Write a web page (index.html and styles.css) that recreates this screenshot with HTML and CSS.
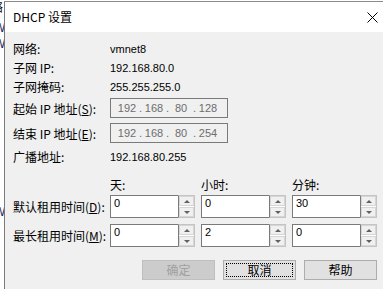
FILE: index.html
```html
<!DOCTYPE html>
<html lang="zh-CN">
<head>
    <meta charset="UTF-8">
    <title>DHCP 设置</title>
    <link rel="stylesheet" href="styles.css">
</head>
<body>
    <div class="screen">
        <div class="strip">
            <div class="strip-line cjk">络</div>
            <div class="strip-line w first-w">W</div>
            <div class="strip-line w">W</div>
            <div class="strip-gap"></div>
            <div class="strip-line w">W</div>
        </div>

        <div class="dialog">
            <div class="titlebar">
                <span class="title">DHCP 设置</span>
                <svg class="close" width="11" height="11" viewBox="0 0 11 11">
                    <path d="M0.5 0.5 L10.5 10.5 M10.5 0.5 L0.5 10.5" stroke="#000" stroke-width="1" fill="none"/>
                </svg>
            </div>

            <div class="content">
                <div class="row">
                    <span class="label">网络:</span>
                    <span class="value">vmnet8</span>
                </div>
                <div class="row">
                    <span class="label">子网 IP:</span>
                    <span class="value">192.168.80.0</span>
                </div>
                <div class="row">
                    <span class="label">子网掩码:</span>
                    <span class="value">255.255.255.0</span>
                </div>

                <div class="row ip-row first-ip">
                    <span class="label">起始 IP 地址(<u>S</u>):</span>
                    <div class="ip-box">
                        <span class="ip-seg">192</span><span class="ip-dot">.</span>
                        <span class="ip-seg">168</span><span class="ip-dot">.</span>
                        <span class="ip-seg">80</span><span class="ip-dot">.</span>
                        <span class="ip-seg">128</span>
                    </div>
                </div>
                <div class="row ip-row second-ip">
                    <span class="label">结束 IP 地址(<u>E</u>):</span>
                    <div class="ip-box">
                        <span class="ip-seg">192</span><span class="ip-dot">.</span>
                        <span class="ip-seg">168</span><span class="ip-dot">.</span>
                        <span class="ip-seg">80</span><span class="ip-dot">.</span>
                        <span class="ip-seg">254</span>
                    </div>
                </div>

                <div class="row broadcast">
                    <span class="label">广播地址:</span>
                    <span class="value">192.168.80.255</span>
                </div>

                <div class="row heads">
                    <span class="label"></span>
                    <span class="col-head">天:</span>
                    <span class="col-head">小时:</span>
                    <span class="col-head">分钟:</span>
                </div>

                <div class="row spin-row first-spin">
                    <span class="label">默认租用时间(<u>D</u>):</span>
                    <div class="spin">
                        <span class="spin-field">0</span>
                        <div class="spin-btns"><span class="spin-btn"><i class="up"></i></span><span class="spin-btn"><i class="down"></i></span></div>
                    </div>
                    <div class="spin">
                        <span class="spin-field">0</span>
                        <div class="spin-btns"><span class="spin-btn"><i class="up"></i></span><span class="spin-btn"><i class="down"></i></span></div>
                    </div>
                    <div class="spin">
                        <span class="spin-field">30</span>
                        <div class="spin-btns"><span class="spin-btn"><i class="up"></i></span><span class="spin-btn"><i class="down"></i></span></div>
                    </div>
                </div>
                <div class="row spin-row second-spin">
                    <span class="label">最长租用时间(<u>M</u>):</span>
                    <div class="spin">
                        <span class="spin-field">0</span>
                        <div class="spin-btns"><span class="spin-btn"><i class="up"></i></span><span class="spin-btn"><i class="down"></i></span></div>
                    </div>
                    <div class="spin">
                        <span class="spin-field">2</span>
                        <div class="spin-btns"><span class="spin-btn"><i class="up"></i></span><span class="spin-btn"><i class="down"></i></span></div>
                    </div>
                    <div class="spin">
                        <span class="spin-field">0</span>
                        <div class="spin-btns"><span class="spin-btn"><i class="up"></i></span><span class="spin-btn"><i class="down"></i></span></div>
                    </div>
                </div>

                <div class="buttons">
                    <span class="btn disabled">确定</span>
                    <span class="btn focused"><span class="focus-ring">取消</span></span>
                    <span class="btn">帮助</span>
                </div>
            </div>
        </div>
    </div>
</body>
</html>
```

FILE: styles.css
```css
html, body {
    margin: 0;
    padding: 0;
    background: #fff;
    overflow: hidden;
}
body {
    width: 383px;
    height: 289px;
    font-family: "Noto Sans CJK SC", "Noto Sans", sans-serif;
    font-size: 12px;
    color: #000;
}
.screen {
    display: flex;
    height: 289px;
}
.strip {
    width: 4px;
    flex: none;
    overflow: hidden;
}
.strip-line {
    height: 16px;
    line-height: 16px;
    white-space: nowrap;
    font-family: "Liberation Sans", sans-serif;
    font-size: 12px;
}
.strip-line.cjk {
    margin-left: -9px;
    margin-top: -1px;
    font-family: "Noto Sans CJK SC", sans-serif;
}
.strip-line.w {
    margin-left: -6px;
    color: #1a2a5a;
}
.strip-line.first-w {
    margin-top: 5px;
}
.strip-gap {
    height: 152px;
}
.dialog {
    flex: 1;
    margin-top: 1px;
    border-top: 1px solid #8a8a8a;
    border-left: 1px solid #7a7a7a;
    background: #f0f0f0;
    display: flex;
    flex-direction: column;
}
.titlebar {
    height: 30px;
    background: #fff;
    display: flex;
    align-items: center;
    justify-content: space-between;
    padding: 0 6px 0 8px;
}
.title {
    font-size: 12px;
    line-height: 16px;
}
.close {
    display: block;
}
.content {
    padding: 7px 7px 0 8px;
}
.row {
    display: flex;
    align-items: center;
    height: 19px;
}
.label {
    width: 97px;
    flex: none;
    white-space: nowrap;
    line-height: 19px;
}
.label u {
    text-underline-offset: 1px;
}
.value {
    font-family: "Liberation Sans", sans-serif;
    font-size: 11px;
}
.ip-row {
    height: 20px;
}
.first-ip {
    margin-top: 2px;
}
.second-ip {
    margin-top: 5px;
}
.ip-box {
    box-sizing: border-box;
    width: 118px;
    height: 20px;
    border: 1px solid #7a7a7a;
    background: #f0f0f0;
    display: flex;
    align-items: center;
    padding-left: 6px;
    font-family: "Liberation Sans", sans-serif;
    font-size: 11px;
    color: #6d6d6d;
}
.ip-seg {
    width: 20px;
    text-align: center;
}
.ip-dot {
    width: 7px;
    text-align: center;
}
.broadcast {
    margin-top: 4px;
}
.heads {
    margin-top: 9px;
    gap: 6px;
}
.heads .label {
    width: 91px;
}
.col-head {
    width: 85px;
    line-height: 19px;
}
.spin-row {
    height: 23px;
    gap: 6px;
    align-items: stretch;
}
.spin-row .label {
    width: 91px;
    line-height: 23px;
}
.first-spin {
    margin-top: 1px;
}
.second-spin {
    margin-top: 6px;
}
.spin {
    width: 85px;
    display: flex;
}
.spin-field {
    flex: 1;
    box-sizing: border-box;
    background: #fff;
    border: 1px solid #7a7a7a;
    border-right: none;
    padding-left: 3px;
    font-family: "Liberation Sans", sans-serif;
    font-size: 11px;
    line-height: 15px;
}
.spin-btns {
    width: 17px;
    box-sizing: border-box;
    border: 1px solid #c4c4c4;
    border-left: 1px solid #7a7a7a;
    background: #fff;
    display: flex;
    flex-direction: column;
    gap: 1px;
}
.spin-btn {
    flex: 1;
    background: #f0f0f0;
    border: 1px solid #d6d6d6;
    display: flex;
    align-items: center;
    justify-content: center;
}
.up {
    width: 0;
    height: 0;
    border-left: 3px solid transparent;
    border-right: 3px solid transparent;
    border-bottom: 3px solid #606060;
}
.down {
    width: 0;
    height: 0;
    border-left: 3px solid transparent;
    border-right: 3px solid transparent;
    border-top: 3px solid #606060;
}
.buttons {
    display: flex;
    justify-content: flex-end;
    gap: 8px;
    margin-top: 13px;
}
.btn {
    box-sizing: border-box;
    width: 73px;
    height: 20px;
    border: 1px solid #adadad;
    background: #e1e1e1;
    display: flex;
    align-items: center;
    justify-content: center;
    line-height: 16px;
}
.btn.disabled {
    background: #cccccc;
    border-color: #bfbfbf;
    color: #a0a0a0;
}
.btn.focused {
    padding: 2px;
}
.focus-ring {
    box-sizing: border-box;
    width: 100%;
    height: 100%;
    border: 1px dotted #000;
    display: flex;
    align-items: center;
    justify-content: center;
}
```
